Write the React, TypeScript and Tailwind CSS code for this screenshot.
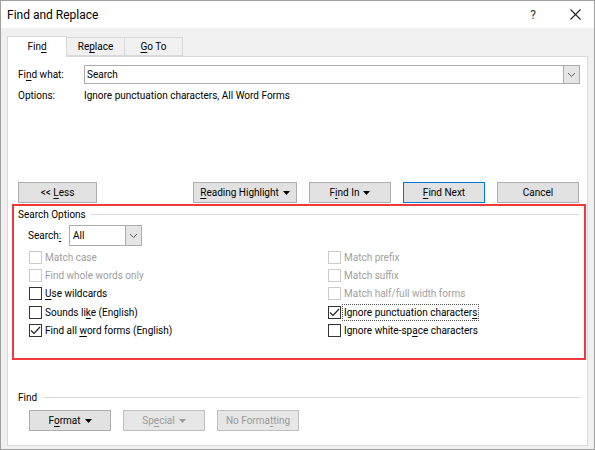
import React from "react"

function U({ children }: { children: React.ReactNode }) {
  return <span className="underline underline-offset-2">{children}</span>
}

function Btn({
  children,
  w = "w-[82px]",
  disabled,
  primary,
}: {
  children: React.ReactNode
  w?: string
  disabled?: boolean
  primary?: boolean
}) {
  return (
    <div
      className={`${w} h-[21px] flex items-center justify-center whitespace-pre border ${
        primary
          ? "border-[#0078d7] bg-[#e1e1e1] text-black"
          : disabled
          ? "border-[#bfbfbf] bg-[#e6e6e6] text-[#9a9a9a]"
          : "border-[#adadad] bg-[#e1e1e1] text-black"
      }`}
    >
      {children}
    </div>
  )
}

function Caret({ gray }: { gray?: boolean }) {
  return (
    <svg width="7" height="4" viewBox="0 0 7 4" className="ml-[4px]">
      <path d="M0 0h7L3.5 4z" fill={gray ? "#9a9a9a" : "#000"} />
    </svg>
  )
}

function Chevron() {
  return (
    <svg width="9" height="6" viewBox="0 0 9 6">
      <path d="M1 1l3.5 3.5L8 1" fill="none" stroke="#606060" strokeWidth="1" />
    </svg>
  )
}

function Check({
  label,
  checked,
  disabled,
  focus,
}: {
  label: React.ReactNode
  checked?: boolean
  disabled?: boolean
  focus?: boolean
}) {
  return (
    <div className="h-[18.4px] flex items-center">
      <div
        className={`w-[13px] h-[13px] border flex items-center justify-center bg-white ${
          disabled ? "border-[#cccccc]" : "border-[#333333]"
        }`}
      >
        {checked && (
          <svg width="11" height="9" viewBox="0 0 11 9">
            <path d="M1 4.5l3 3L10 1" fill="none" stroke="#222" strokeWidth="1.2" />
          </svg>
        )}
      </div>
      <span
        className={`ml-[1px] px-[1px] leading-[15px] whitespace-nowrap ${
          disabled ? "text-[#a0a0a0]" : "text-black"
        } ${focus ? "border border-dotted border-[#555]" : "border border-transparent"}`}
      >
        {label}
      </span>
    </div>
  )
}

export default function App() {
  return (
    <div
      className="w-[595px] h-[450px] border border-[#a0a0a0] bg-[#f0f0f0] flex flex-col text-[10px] text-black"
      style={{ fontFamily: '"Segoe UI", Roboto, sans-serif' }}
    >
      <div className="h-[27px] bg-white flex items-center pl-[6px] shrink-0">
        <span className="text-[12px]">Find and Replace</span>
        <span className="ml-auto text-[12px] text-[#333] mr-[34px]">?</span>
        <svg width="11" height="11" viewBox="0 0 11 11" className="mr-[13px]">
          <path d="M0.5 0.5l10 10M10.5 0.5l-10 10" stroke="#222" strokeWidth="1.1" />
        </svg>
      </div>

      <div className="flex-1 flex flex-col px-[6px] pb-[3px] pt-[7px]">
        <div className="flex items-end h-[21px] relative z-10">
          <div className="w-[60px] h-[21px] bg-white border border-b-0 border-[#d9d9d9] flex items-center justify-center -mb-px pb-px">
            Fin<U>d</U>
          </div>
          <div className="w-[58px] h-[19px] border border-l-0 border-[#d9d9d9] flex items-center justify-center">
            Re<U>p</U>lace
          </div>
          <div className="w-[58px] h-[19px] border border-l-0 border-[#d9d9d9] flex items-center justify-center">
            <U>G</U>o To
          </div>
        </div>

        <div className="flex-1 bg-white border border-[#d9d9d9] flex flex-col pt-[8px]">
          <div className="flex items-center pl-[10px] pr-[7px]">
            <span className="w-[66px]">
              Fi<U>n</U>d what:
            </span>
            <div className="flex-1 h-[19px] border border-[#acacac] flex items-center">
              <span className="pl-[2px] flex-1">Search</span>
              <div className="w-[16px] h-[17px] bg-[#e5e5e5] border-l border-[#acacac] flex items-center justify-center">
                <Chevron />
              </div>
            </div>
          </div>
          <div className="flex items-center pl-[10px] mt-[1px] h-[20px]">
            <span className="w-[66px]">Options:</span>
            <span>Ignore punctuation characters, All Word Forms</span>
          </div>

          <div className="flex items-center pl-[10px] pr-[8px] mt-[77px]">
            <Btn>
              {"<< "}
              <U>L</U>ess
            </Btn>
            <div className="ml-[96px] flex gap-[12px]">
              <Btn w="w-[104px]">
                <U>R</U>eading Highlight
                <Caret />
              </Btn>
              <Btn>
                F<U>i</U>nd In
                <Caret />
              </Btn>
              <Btn primary>
                <U>F</U>ind Next
              </Btn>
              <Btn>Cancel</Btn>
            </div>
          </div>

          <div className="mt-[1px] ml-[4px] mr-[1px] h-[156px] border-2 border-[#f0393d] flex flex-col pl-[4px] pr-[5px]">
            <div className="flex items-center h-[16px]">
              <span>Search Options</span>
              <div className="flex-1 h-px bg-[#dcdcdc] ml-[4px]" />
            </div>
            <div className="flex items-center mt-[3px] pl-[10px]">
              <span className="w-[41px]">
                Search<U>:</U>
              </span>
              <div className="w-[73px] h-[21px] border border-[#acacac] flex items-center">
                <span className="pl-[3px] flex-1">All</span>
                <div className="w-[16px] h-[19px] bg-[#e5e5e5] border-l border-[#acacac] flex items-center justify-center">
                  <Chevron />
                </div>
              </div>
            </div>
            <div className="flex pl-[11px] mt-[2px]">
              <div className="w-[299px] flex flex-col">
                <Check label="Match case" disabled />
                <Check label="Find whole words only" disabled />
                <Check label={<><U>U</U>se wildcards</>} />
                <Check label={<>Sounds li<U>k</U>e (English)</>} />
                <Check label={<>Find all <U>w</U>ord forms (English)</>} checked />
              </div>
              <div className="flex flex-col">
                <Check label="Match prefix" disabled />
                <Check label="Match suffix" disabled />
                <Check label="Match half/full width forms" disabled />
                <Check label={<>Ignore punctuation character<U>s</U></>} checked focus />
                <Check label={<>Ignore white-sp<U>a</U>ce characters</>} />
              </div>
            </div>
          </div>

          <div className="flex items-center pl-[10px] pr-[6px] mt-[29px] h-[16px]">
            <span>Find</span>
            <div className="flex-1 h-px bg-[#dcdcdc] ml-[6px]" />
          </div>
          <div className="flex gap-[12px] pl-[21px] mt-[5px]">
            <Btn>
              F<U>o</U>rmat
              <Caret />
            </Btn>
            <Btn disabled>
              Sp<U>e</U>cial
              <Caret gray />
            </Btn>
            <Btn disabled>No Forma<U>t</U>ting</Btn>
          </div>
        </div>
      </div>
    </div>
  )
}
